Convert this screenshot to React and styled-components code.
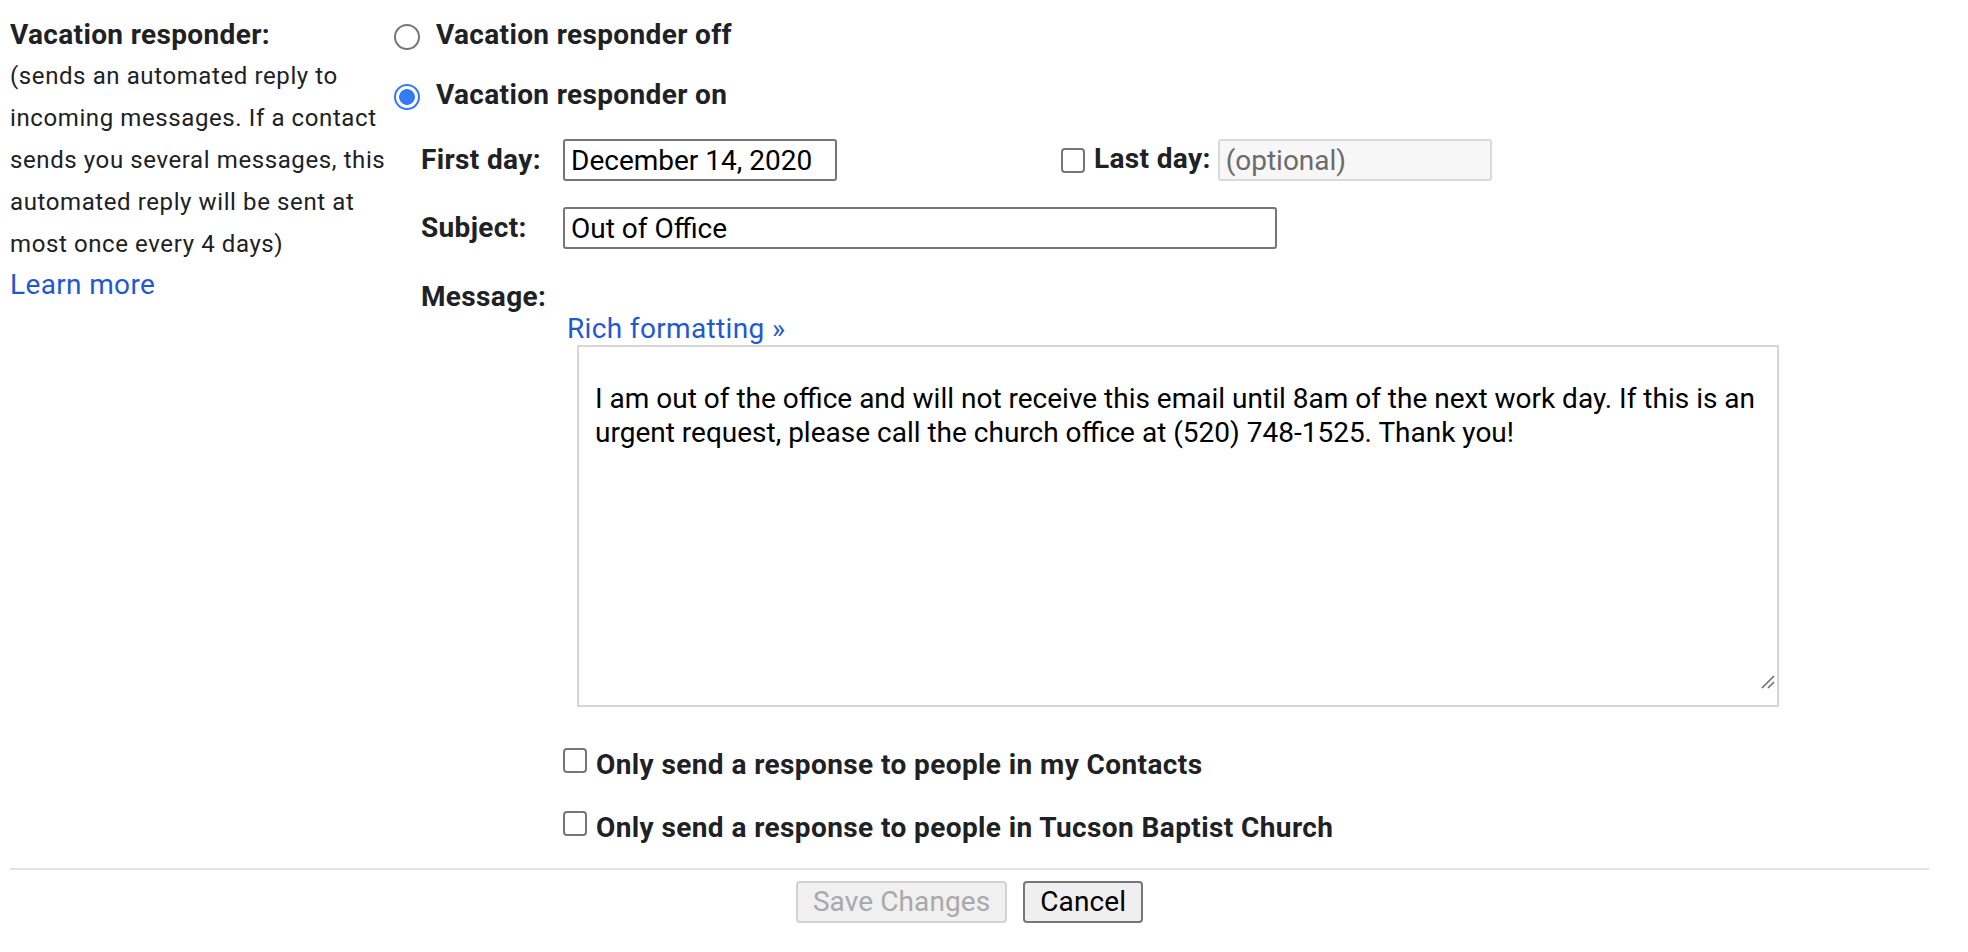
import React from 'react';
import styled, { createGlobalStyle } from 'styled-components';

const GlobalStyle = createGlobalStyle`
  body {
    margin: 0;
    background: #fff;
    font-family: Roboto, "Liberation Sans", Arial, sans-serif;
    color: #202124;
  }
`;

const Page = styled.div`
  padding: 18px 39px 0 10px;
`;

const Section = styled.div`
  display: grid;
  grid-template-columns: 384px 1fr;
`;

const SideInfo = styled.div`
  display: flex;
  flex-direction: column;
`;

const SideTitle = styled.div`
  font-size: 28px;
  line-height: 34px;
  font-weight: 700;
  letter-spacing: 0.35px;
`;

const SideText = styled.div`
  margin-top: 3px;
  width: 396px;
  font-size: 24px;
  line-height: 42px;
  letter-spacing: 0.6px;
`;

const Link = styled.a`
  color: #1f59d0;
  text-decoration: none;
  font-size: 28px;
  line-height: 34px;
  letter-spacing: 0.35px;
  cursor: pointer;
`;

const LearnMore = styled(Link)`
  margin-top: 3px;
`;

const Options = styled.div`
  display: flex;
  flex-direction: column;
`;

const RadioRow = styled.label`
  display: flex;
  align-items: flex-start;
  gap: 16px;
  margin-top: ${p => p.$mt || 0}px;
  font-size: 28px;
  line-height: 34px;
  font-weight: 700;
  letter-spacing: 0.35px;
`;

const Radio = styled.input.attrs({ type: 'radio' })`
  appearance: none;
  box-sizing: border-box;
  flex: none;
  width: 26px;
  height: 26px;
  margin: 6px 0 0;
  border-radius: 50%;
  border: 2px solid ${p => (p.checked ? '#3479f6' : '#767676')};
  background: ${p =>
    p.checked
      ? 'radial-gradient(circle, #3479f6 0 7.5px, #fff 8.2px)'
      : '#fff'};
`;

const FieldRow = styled.div`
  display: flex;
  align-items: center;
  margin-left: 27px;
  margin-top: ${p => p.$mt || 0}px;
`;

const FieldLabel = styled.label`
  flex: none;
  width: ${p => p.$w || 142}px;
  font-size: 28px;
  line-height: 34px;
  font-weight: 700;
  letter-spacing: 0.35px;
  padding-bottom: ${p => p.$lift || 0}px;
`;

const TextInput = styled.input`
  box-sizing: border-box;
  flex: none;
  width: ${p => p.$w}px;
  height: 42px;
  margin: 0;
  padding: 0 6px;
  border: 2px solid ${p => (p.disabled ? '#d9d9d9' : '#767676')};
  border-radius: 3px;
  background: ${p => (p.disabled ? '#f7f7f7' : '#fff')};
  font-family: Roboto, "Liberation Sans", Arial, sans-serif;
  font-size: 28px;
  color: #000;
  outline: none;

  &::placeholder {
    color: #6b6b6b;
  }
`;

const Check = styled.input.attrs({ type: 'checkbox' })`
  appearance: none;
  box-sizing: border-box;
  flex: none;
  width: 24px;
  height: 25px;
  margin: 0;
  border: 2px solid #767676;
  border-radius: 4px;
  background: #fff;
`;

const LastDay = styled.div`
  display: flex;
  align-items: center;
  margin-left: 224px;
  gap: 9px;

  & > ${FieldLabel} {
    width: auto;
    margin-right: -2px;
  }
`;

const MessageLabel = styled(FieldLabel)`
  display: block;
  margin: 32px 0 0 27px;
  line-height: 32px;
`;

const RichLink = styled(Link)`
  margin-left: 173px;
  line-height: 32px;
  align-self: flex-start;
`;

const EditorBox = styled.div`
  position: relative;
  margin-left: 183px;
  width: 1202px;
  height: 362px;
`;

const Editor = styled.textarea`
  box-sizing: border-box;
  display: block;
  width: 100%;
  height: 100%;
  margin: 0;
  padding: 35px 4px 4px 16px;
  border: 2px solid #d6d6d6;
  border-radius: 0;
  resize: none;
  outline: none;
  font-family: Roboto, "Liberation Sans", Arial, sans-serif;
  font-size: 28px;
  line-height: 34px;
  color: #000;
  background: #fff;
`;

const Grip = styled.svg`
  position: absolute;
  right: 4px;
  bottom: 18px;
`;

const CheckRow = styled.label`
  display: flex;
  align-items: flex-start;
  gap: 9px;
  margin-left: 169px;
  margin-top: ${p => p.$mt}px;
  font-size: 28px;
  line-height: 34px;
  font-weight: 700;
  letter-spacing: 0.4px;
`;

const Divider = styled.hr`
  margin: 23px 0 0;
  border: none;
  border-top: 2px solid #e3e3e3;
`;

const ButtonBar = styled.div`
  display: flex;
  justify-content: center;
  gap: 16px;
  margin-top: 11px;
`;

const Button = styled.button`
  box-sizing: border-box;
  height: 42px;
  padding: 0 15px;
  border-radius: 4px;
  border: 2px solid ${p => (p.disabled ? '#d2d2d2' : '#767676')};
  background: ${p => (p.disabled ? '#f0f0f0' : '#efefef')};
  color: ${p => (p.disabled ? '#a9a9a9' : '#000')};
  font-family: Roboto, "Liberation Sans", Arial, sans-serif;
  font-size: 28px;
  line-height: 1;
  letter-spacing: 0.1px;
`;

const message =
  'I am out of the office and will not receive this email until 8am of the next work day. If this is an\nurgent request, please call the church office at (520) 748-1525. Thank you!';

export default function App() {
  return (
    <Page>
      <GlobalStyle />
      <Section>
        <SideInfo>
          <SideTitle>Vacation responder:</SideTitle>
          <SideText>
            (sends an automated reply to incoming messages. If a contact sends you
            several messages, this automated reply will be sent at most once every 4
            days)
          </SideText>
          <LearnMore>Learn more</LearnMore>
        </SideInfo>

        <Options>
          <RadioRow>
            <Radio name="vacation" />
            Vacation responder off
          </RadioRow>
          <RadioRow $mt={26}>
            <Radio name="vacation" checked readOnly />
            Vacation responder on
          </RadioRow>

          <FieldRow $mt={27}>
            <FieldLabel>First day:</FieldLabel>
            <TextInput $w={274} defaultValue="December 14, 2020" />
            <LastDay>
              <Check />
              <FieldLabel $lift={2}>Last day:</FieldLabel>
              <TextInput $w={274} disabled placeholder="(optional)" />
            </LastDay>
          </FieldRow>

          <FieldRow $mt={26}>
            <FieldLabel>Subject:</FieldLabel>
            <TextInput $w={714} defaultValue="Out of Office" />
          </FieldRow>

          <MessageLabel>Message:</MessageLabel>
          <RichLink>Rich formatting »</RichLink>
          <EditorBox>
            <Editor defaultValue={message} />
            <Grip width="14" height="14" viewBox="0 0 14 14">
              <path d="M1 13 L13 1 M7 13 L13 7" stroke="#6f6f6f" strokeWidth="1.6" fill="none" />
            </Grip>
          </EditorBox>

          <CheckRow $mt={41}>
            <Check />
            Only send a response to people in my Contacts
          </CheckRow>
          <CheckRow $mt={29}>
            <Check />
            Only send a response to people in Tucson Baptist Church
          </CheckRow>
        </Options>
      </Section>

      <Divider />
      <ButtonBar>
        <Button disabled>Save Changes</Button>
        <Button>Cancel</Button>
      </ButtonBar>
    </Page>
  );
}
